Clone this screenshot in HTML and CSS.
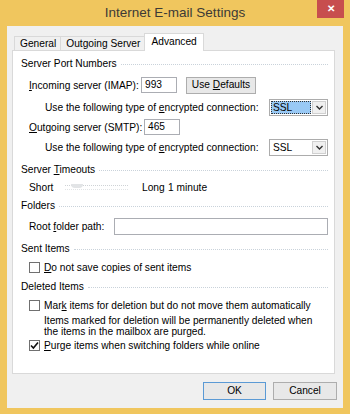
FILE: index.html
```html
<!DOCTYPE html>
<html>
<head>
	<title>Internet E-mail Settings</title>
	<link rel="stylesheet" href="styles.css">
</head>
<body>
	<div class="frame">
		<div class="titlebar">
			<span></span>
			<span class="title">Internet E-mail Settings</span>
			<span class="close">&#x2715;</span>
		</div>
		<div class="client">
			<div class="tabs">
				<div class="tab first">General</div>
				<div class="tab">Outgoing Server</div>
				<div class="tab active">Advanced</div>
			</div>
			<div class="panel">
				<div class="heading h-ports"><span>Server Port Numbers</span><i></i></div>
				<div class="row r-in">
					<label class="lbl-in"><u>I</u>ncoming server (IMAP):</label>
					<div class="input port">993</div>
					<button type="button" class="btn defaults">Use <u>D</u>efaults</button>
				</div>
				<div class="row r-use1">
					<label class="lbl-use">Use the following type of <u>e</u>ncrypted connection:</label>
					<div class="select focused"><span class="val">SSL</span><span class="arrow"><svg width="7" height="5" viewBox="0 0 7 5"><path d="M0.5 1 L3.5 4 L6.5 1" fill="none" stroke="#333" stroke-width="1.4"/></svg></span></div>
				</div>
				<div class="row r-out">
					<label class="lbl-out"><u>O</u>utgoing server (SMTP):</label>
					<div class="input port">465</div>
				</div>
				<div class="row r-use2">
					<label class="lbl-use">Use the following type of <u>e</u>ncrypted connection:</label>
					<div class="select"><span class="val">SSL</span><span class="arrow"><svg width="7" height="5" viewBox="0 0 7 5"><path d="M0.5 1 L3.5 4 L6.5 1" fill="none" stroke="#333" stroke-width="1.4"/></svg></span></div>
				</div>
				<div class="heading h-timeouts"><span>Server <u>T</u>imeouts</span><i></i></div>
				<div class="row r-slider">
					<span class="short">Short</span>
					<div class="slider"><span class="thumb"></span></div>
					<span class="long">Long</span>
					<span class="minute">1 minute</span>
				</div>
				<div class="heading h-folders"><span>Folders</span><i></i></div>
				<div class="row r-root">
					<label class="lbl-root">Root <u>f</u>older path:</label>
					<div class="input path"></div>
				</div>
				<div class="heading h-sent"><span>Sent Items</span><i></i></div>
				<div class="row check r-save">
					<span class="box"></span>
					<span><u>D</u>o not save copies of sent items</span>
				</div>
				<div class="heading h-deleted"><span>Deleted Items</span><i></i></div>
				<div class="row check r-mark">
					<span class="box"></span>
					<span>Mar<u>k</u> items for deletion but do not move them automatically</span>
				</div>
				<p class="note">Items marked for deletion will be permanently deleted when<br>the items in the mailbox are purged.</p>
				<div class="row check r-purge">
					<span class="box"><svg width="9" height="9" viewBox="0 0 9 9"><path d="M1 4.5 L3.4 7 L8 1.5" fill="none" stroke="#111" stroke-width="1.6"/></svg></span>
					<span><u>P</u>urge items when switching folders while online</span>
				</div>
			</div>
			<div class="actions">
				<button type="button" class="btn ok">OK</button>
				<button type="button" class="btn cancel">Cancel</button>
			</div>
		</div>
	</div>
</body>
</html>
```
FILE: styles.css
```css
body {
	margin: 0;
	background: #f0c65e;
	font-family: "Liberation Sans", Arial, sans-serif;
	font-size: 10.2px;
	color: #000;
	white-space: nowrap;
}

.frame {
	width: 350px;
	height: 414px;
	box-sizing: border-box;
	padding: 0 7px;
	background: #f0c65e;
}

.titlebar {
	display: grid;
	grid-template-columns: 1fr auto 1fr;
	align-items: start;
	height: 26px;
}

.title {
	font-size: 13.5px;
	color: #3c3a36;
	line-height: 26px;
}

.close {
	justify-self: end;
	width: 27px;
	height: 18px;
	margin-right: -1px;
	background: #c74e4e;
	color: #fff;
	font-size: 10px;
	font-weight: bold;
	text-align: center;
	line-height: 18px;
}

.client {
	height: 382px;
	background: #f0f0f0;
	box-sizing: border-box;
	padding: 7px 8px 0 5px;
}

.tabs {
	display: flex;
	height: 17px;
	padding-left: 2px;
	align-items: flex-end;
	position: relative;
	z-index: 1;
}

.tab {
	height: 14px;
	box-sizing: border-box;
	padding: 0 4px 0 5px;
	border: 1px solid #d9d9d9;
	border-bottom: 0;
	border-left: 0;
	background: #f0f0f0;
	line-height: 13px;
}

.tab.first {
	border-left: 1px solid #d9d9d9;
}

.tab.active {
	height: 18px;
	margin-bottom: -1px;
	margin-left: -1px;
	border-left: 1px solid #d9d9d9;
	background: #fff;
	padding: 0 6px;
	line-height: 16px;
}

.panel {
	height: 324px;
	box-sizing: border-box;
	border: 1px solid #d9d9d9;
	background: #fff;
	padding: 6px 6px 0 8px;
}

.heading {
	display: flex;
	align-items: center;
	height: 14px;
	line-height: 14px;
}

.heading i {
	flex: 1;
	margin-left: 4px;
	border-top: 1px dotted #c9d2da;
}

.row {
	display: flex;
	align-items: center;
	padding-left: 8px;
}

.row > * {
	flex-shrink: 0;
}

.input {
	box-sizing: border-box;
	border: 1px solid #abadb3;
	background: #fff;
	padding-left: 3px;
	line-height: 14px;
}

.port {
	width: 36px;
	height: 16px;
}

.btn {
	font: inherit;
	color: #000;
	background: #e8e8e8;
	border: 1px solid #adadad;
	padding: 0;
	height: 17px;
	line-height: 14px;
}

.r-in {
	margin-top: 5px;
	height: 18px;
}

.lbl-in {
	width: 112px;
}

.defaults {
	width: 70px;
	margin-left: 9px;
}

.r-use1 {
	margin-top: 4px;
	height: 18px;
}

.r-use2 {
	margin-top: 2px;
	height: 18px;
}

.lbl-use {
	width: 224px;
	padding-left: 16px;
}

.select {
	display: flex;
	width: 59px;
	height: 17px;
	box-sizing: border-box;
	border: 1px solid #acacac;
	background: #fff;
	padding: 1px;
}

.select .val {
	flex: 1;
	padding-left: 2px;
	line-height: 13px;
}

.select.focused .val {
	background: #99c9f5;
	outline: 1px dotted #333;
	outline-offset: -1px;
}

.select .arrow {
	width: 14px;
	margin-left: 1px;
	box-sizing: border-box;
	border: 1px solid #d0d0d0;
	background: #f0f0f0;
	display: flex;
	align-items: center;
	justify-content: center;
}

.r-out {
	margin-top: 2px;
	height: 18px;
}

.lbl-out {
	width: 115px;
}

.h-timeouts {
	margin-top: 7px;
}

.r-slider {
	margin-top: 3px;
	height: 14px;
}

.short {
	width: 36px;
}

.slider {
	position: relative;
	width: 63px;
	height: 3px;
	border-top: 1px dotted #cfd3d6;
	border-bottom: 1px dotted #e1e4e6;
	margin-right: 14px;
}

.thumb {
	position: absolute;
	left: 6px;
	top: -2px;
	width: 12px;
	height: 4px;
	background: #e2e4e6;
	border-radius: 0 0 4px 4px;
}

.long {
	width: 26px;
}

.h-folders {
	margin-top: 5px;
}

.r-root {
	margin-top: 5px;
	height: 17px;
}

.lbl-root {
	width: 85px;
}

.path {
	width: 214px;
	height: 17px;
}

.h-sent {
	margin-top: 7px;
}

.check {
	height: 14px;
	gap: 4px;
}

.box {
	width: 11px;
	height: 11px;
	box-sizing: border-box;
	border: 1px solid #707070;
	background: #fff;
	display: flex;
	align-items: center;
	justify-content: center;
}

.r-save {
	margin-top: 4px;
}

.h-deleted {
	margin-top: 6px;
}

.r-mark {
	margin-top: 4px;
}

.note {
	margin: 3px 0 0 23px;
	line-height: 11px;
}

.r-purge {
	margin-top: 1px;
}

.actions {
	display: flex;
	justify-content: flex-end;
	gap: 7px;
	margin-top: 8px;
	margin-right: -2px;
}

.ok {
	width: 63px;
	height: 18px;
	border-color: #5b9ad5;
}

.cancel {
	width: 64px;
	height: 18px;
}
```
